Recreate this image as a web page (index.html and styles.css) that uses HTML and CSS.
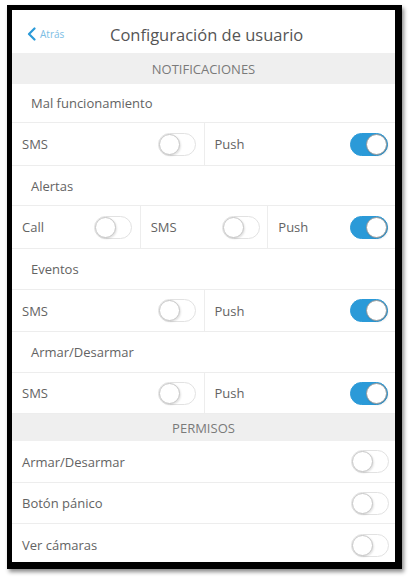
FILE: index.html
```html
<!DOCTYPE html>
<html>
<head>
<meta charset="utf-8">
<link rel="stylesheet" href="styles.css">
</head>
<body>
<div class="frame">
  <div class="screen">
    <div class="header">
      <div class="back">
        <svg class="chev" width="9" height="14" viewBox="0 0 9 14"><path d="M7.5 1.5 L2 7 L7.5 12.5" fill="none" stroke="#2b9ad8" stroke-width="2.2" stroke-linecap="round" stroke-linejoin="round"/></svg>
        <span class="back-text">Atrás</span>
      </div>
      <div class="title">Configuración de usuario</div>
    </div>

    <div class="band band-notif">NOTIFICACIONES</div>

    <div class="label-row h39">Mal funcionamiento</div>
    <div class="toggle-row cols-2 h43">
      <div class="cell"><span>SMS</span><span class="tog"></span></div>
      <div class="cell"><span>Push</span><span class="tog on"></span></div>
    </div>

    <div class="label-row h40">Alertas</div>
    <div class="toggle-row cols-3 h43">
      <div class="cell"><span>Call</span><span class="tog"></span></div>
      <div class="cell"><span>SMS</span><span class="tog"></span></div>
      <div class="cell"><span>Push</span><span class="tog on"></span></div>
    </div>

    <div class="label-row h41">Eventos</div>
    <div class="toggle-row cols-2 h42">
      <div class="cell"><span>SMS</span><span class="tog"></span></div>
      <div class="cell"><span>Push</span><span class="tog on"></span></div>
    </div>

    <div class="label-row h41">Armar/Desarmar</div>
    <div class="toggle-row cols-2 h41">
      <div class="cell"><span>SMS</span><span class="tog"></span></div>
      <div class="cell"><span>Push</span><span class="tog on"></span></div>
    </div>

    <div class="band band-perm">PERMISOS</div>

    <div class="perm-row h42"><span>Armar/Desarmar</span><span class="tog"></span></div>
    <div class="perm-row h41"><span>Botón pánico</span><span class="tog"></span></div>
    <div class="perm-row h42 last"><span>Ver cámaras</span><span class="tog"></span></div>
  </div>
</div>
</body>
</html>
```

FILE: styles.css
```css
* { box-sizing: border-box; }
html, body { margin: 0; padding: 0; background: #ffffff; }
body {
  font-family: "Open Sans", "Noto Sans", sans-serif;
  color: #636363;
  width: 416px;
  height: 583px;
  overflow: hidden;
}
.frame {
  margin: 5px 0 0 7px;
  width: 395px;
  height: 564px;
  border-style: solid;
  border-color: #000;
  border-width: 5px 7px 7px 5px;
  box-shadow: 2px 3px 4px rgba(0,0,0,0.45);
  background: #fff;
}
.screen {
  display: flex;
  flex-direction: column;
  height: 100%;
  overflow: hidden;
}
.header {
  height: 43px;
  display: flex;
  align-items: center;
  padding-top: 5px;
  flex-shrink: 0;
}
.back {
  display: flex;
  align-items: center;
  gap: 4px;
  padding-left: 15px;
  width: 96px;
}
.back-text {
  font-size: 10px;
  color: #7bbde4;
}
.title {
  font-size: 16.5px;
  color: #555;
  padding-left: 2px;
}
.band {
  background: #efefef;
  color: #7a7a7a;
  font-size: 13px;
  display: flex;
  align-items: center;
  justify-content: center;
  flex-shrink: 0;
}
.band-notif { height: 31px; }
.band-perm { height: 27px; padding-top: 1px; }
.label-row {
  display: flex;
  align-items: center;
  padding-left: 19px;
  font-size: 13px;
  border-bottom: 1px solid #ededed;
  flex-shrink: 0;
}
.toggle-row {
  display: grid;
  border-bottom: 1px solid #ededed;
  flex-shrink: 0;
  font-size: 13px;
}
.h39 { height: 39px; }
.h40 { height: 40px; }
.h41 { height: 41px; }
.h42 { height: 42px; }
.h43 { height: 43px; }
.cols-2 { grid-template-columns: 1fr 1fr; }
.cols-3 { grid-template-columns: 1fr 1fr 1fr; }
.cell {
  display: flex;
  align-items: center;
  justify-content: space-between;
  padding: 0 7px 0 10px;
  border-left: 1px solid #ededed;
}
.cell:first-child { border-left: none; padding-right: 8px; }
.perm-row {
  display: flex;
  align-items: center;
  justify-content: space-between;
  padding: 0 6px 0 10px;
  font-size: 13px;
  border-bottom: 1px solid #ededed;
  flex-shrink: 0;
}
.perm-row.last { border-bottom: none; }
.tog {
  position: relative;
  width: 38px;
  height: 23px;
  border-radius: 12px;
  background: #fff;
  border: 1px solid #e2e2e2;
  flex-shrink: 0;
}
.tog::after {
  content: "";
  position: absolute;
  left: 0;
  top: 0;
  width: 21px;
  height: 21px;
  border-radius: 50%;
  background: #fff;
  border: 1px solid #c6c6c6;
  box-shadow: 1px 1px 2px rgba(0,0,0,0.12);
  box-sizing: border-box;
}
.tog.on {
  background: #2b9ad8;
  border-color: #2b9ad8;
}
.tog.on::after {
  left: auto;
  right: 0;
  border-color: #9a9a9a;
}
```
